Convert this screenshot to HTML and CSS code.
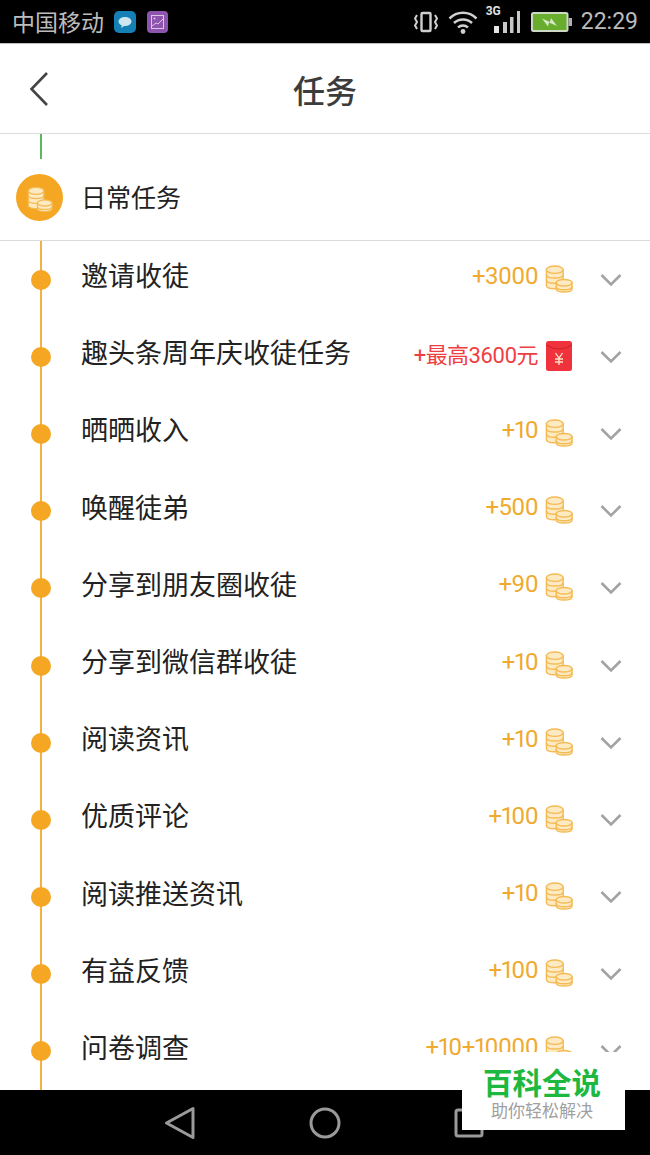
FILE: index.html
```html
<!DOCTYPE html>
<html lang="zh-CN">

<head>
    <meta charset="UTF-8">
    <title>任务</title>
    <link rel="stylesheet" href="styles.css">
</head>

<body>
    <svg class="defs" width="0" height="0">
        <symbol id="coins" viewBox="0 0 30 30">
            <g fill="#fdeac2" stroke="#f4bb55" stroke-width="1.500">
                <path d="M1.500 5v17c0 2 3.500 3.500 9 3.500s9-1.500 9-3.500V5z"/>
                <ellipse cx="10.500" cy="5" rx="9" ry="4"/>
                <path d="M1.500 10.500c0 2 3.500 3.500 9 3.500s9-1.500 9-3.500M1.500 16c0 2 3.500 3.500 9 3.500s9-1.500 9-3.500" fill="none"/>
                <path d="M12 19v6.500c0 2 3.500 3.500 8.500 3.500s8.500-1.500 8.500-3.500V19z"/>
                <ellipse cx="20.500" cy="19" rx="8.500" ry="3.500"/>
                <path d="M12 23c0 2 3.500 3.500 8.500 3.500s8.500-1.500 8.500-3.500" fill="none"/>
            </g>
        </symbol>
        <symbol id="chevron" viewBox="0 0 22 14">
            <path d="M1.500 2L11 11.500 20.500 2" fill="none" stroke="#a3a3a3" stroke-width="2.600"/>
        </symbol>
    </svg>

    <div class="phone">
        <div class="statusbar">
            <div class="status-left">
                <span class="carrier">中国移动</span>
                <svg class="note" width="22" height="22" viewBox="0 0 22 22">
                    <rect width="22" height="22" rx="5" fill="#1580b5"/>
                    <ellipse cx="11" cy="10.500" rx="6.500" ry="4.500" fill="#cfe6f0"/>
                    <path d="M8 14l-1 3 4-2.500z" fill="#cfe6f0"/>
                </svg>
                <svg class="note" width="21" height="22" viewBox="0 0 21 22">
                    <rect width="21" height="22" rx="4" fill="#8d55ad"/>
                    <rect x="4.500" y="4.500" width="12" height="13" fill="none" stroke="#dcc6e8" stroke-width="1"/>
                    <path d="M5 15l4-3 2 1 5-5" fill="none" stroke="#dcc6e8" stroke-width="1"/>
                    <circle cx="7.500" cy="7.500" r="1" fill="#dcc6e8"/>
                </svg>
            </div>
            <div class="status-right">
                <svg width="24" height="22" viewBox="0 0 24 22" class="st-vibrate">
                    <rect x="7.500" y="2" width="9" height="18" rx="1" fill="none" stroke="#cfcfcf" stroke-width="2.400"/>
                    <path d="M3 4L1 7.500 3 11l-2 3.500L3 18M21 4l2 3.500L21 11l2 3.500L21 18" fill="none" stroke="#cfcfcf" stroke-width="2"/>
                </svg>
                <svg width="30" height="24" viewBox="0 0 30 24" class="st-wifi">
                    <path d="M1.500 8.500a19 19 0 0 1 27 0M6 13a13 13 0 0 1 18 0M10 17.500a7 7 0 0 1 10 0" fill="none" stroke="#d0d0d0" stroke-width="2.500"/>
                    <circle cx="15" cy="21.500" r="2.400" fill="#d0d0d0"/>
                </svg>
                <div class="st-signal">
                    <span class="st-3g">3G</span>
                    <svg width="26" height="22" viewBox="0 0 26 22">
                        <rect x="0" y="15" width="5" height="7" fill="#e6e6e6"/>
                        <rect x="9" y="11" width="4" height="11" fill="#c8c8c8"/>
                        <rect x="16" y="6" width="3.500" height="16" fill="#c8c8c8"/>
                        <rect x="23" y="0" width="3" height="22" fill="#c8c8c8"/>
                    </svg>
                </div>
                <svg width="41" height="20" viewBox="0 0 41 20" class="st-battery">
                    <rect x="1" y="1" width="35.500" height="18" rx="1.500" fill="#68ad2e" stroke="#cfd8c4" stroke-width="2"/>
                    <rect x="37.500" y="6" width="3.500" height="8" fill="#b0b0b0"/>
                    <path d="M11 6.500l8 3.500 1-4 6 8-8-3.500-1 4z" fill="#d8e8c8"/>
                </svg>
                <span class="clock">22:29</span>
            </div>
        </div>

        <header class="topbar">
            <svg class="back" width="22" height="36" viewBox="0 0 22 36">
                <path d="M19 2L3.500 18 19 34" fill="none" stroke="#444" stroke-width="2.600"/>
            </svg>
            <h1>任务</h1>
        </header>

        <div class="stub"></div>

        <div class="section-head">
            <div class="section-icon">
                <svg width="26" height="27" viewBox="0 0 30 30"><use href="#coins"/></svg>
            </div>
            <span class="section-name">日常任务</span>
        </div>

        <ul class="tasks">
            <li class="task">
                <div class="rail"><i></i></div>
                <span class="name">邀请收徒</span>
                <span class="reward">+3000</span>
                <svg class="coin"><use href="#coins"/></svg>
                <svg class="chev"><use href="#chevron"/></svg>
            </li>
            <li class="task">
                <div class="rail"><i></i></div>
                <span class="name">趣头条周年庆收徒任务</span>
                <span class="reward red">+最高3600元</span>
                <svg class="coin" viewBox="0 0 28 30">
                    <rect x="1" width="26" height="30" rx="2.500" fill="#f0323c"/>
                    <path d="M1 4q13 8 26 0" fill="none" stroke="#c9202a" stroke-width="1"/>
                    <path d="M10.500 12l3.500 5 3.500-5M10 18h8M10 21h8M14 17v7" fill="none" stroke="#ffe3c8" stroke-width="1.300"/>
                </svg>
                <svg class="chev"><use href="#chevron"/></svg>
            </li>
            <li class="task">
                <div class="rail"><i></i></div>
                <span class="name">晒晒收入</span>
                <span class="reward">+10</span>
                <svg class="coin"><use href="#coins"/></svg>
                <svg class="chev"><use href="#chevron"/></svg>
            </li>
            <li class="task">
                <div class="rail"><i></i></div>
                <span class="name">唤醒徒弟</span>
                <span class="reward">+500</span>
                <svg class="coin"><use href="#coins"/></svg>
                <svg class="chev"><use href="#chevron"/></svg>
            </li>
            <li class="task">
                <div class="rail"><i></i></div>
                <span class="name">分享到朋友圈收徒</span>
                <span class="reward">+90</span>
                <svg class="coin"><use href="#coins"/></svg>
                <svg class="chev"><use href="#chevron"/></svg>
            </li>
            <li class="task">
                <div class="rail"><i></i></div>
                <span class="name">分享到微信群收徒</span>
                <span class="reward">+10</span>
                <svg class="coin"><use href="#coins"/></svg>
                <svg class="chev"><use href="#chevron"/></svg>
            </li>
            <li class="task">
                <div class="rail"><i></i></div>
                <span class="name">阅读资讯</span>
                <span class="reward">+10</span>
                <svg class="coin"><use href="#coins"/></svg>
                <svg class="chev"><use href="#chevron"/></svg>
            </li>
            <li class="task">
                <div class="rail"><i></i></div>
                <span class="name">优质评论</span>
                <span class="reward">+100</span>
                <svg class="coin"><use href="#coins"/></svg>
                <svg class="chev"><use href="#chevron"/></svg>
            </li>
            <li class="task">
                <div class="rail"><i></i></div>
                <span class="name">阅读推送资讯</span>
                <span class="reward">+10</span>
                <svg class="coin"><use href="#coins"/></svg>
                <svg class="chev"><use href="#chevron"/></svg>
            </li>
            <li class="task">
                <div class="rail"><i></i></div>
                <span class="name">有益反馈</span>
                <span class="reward">+100</span>
                <svg class="coin"><use href="#coins"/></svg>
                <svg class="chev"><use href="#chevron"/></svg>
            </li>
            <li class="task">
                <div class="rail"><i></i></div>
                <span class="name">问卷调查</span>
                <span class="reward">+10+10000</span>
                <svg class="coin"><use href="#coins"/></svg>
                <svg class="chev"><use href="#chevron"/></svg>
            </li>
        </ul>

        <div class="navbar">
            <svg width="32" height="34" viewBox="0 0 32 34">
                <path d="M29 2.500v29L2.500 17z" fill="none" stroke="#9a9a9a" stroke-width="3" stroke-linejoin="round"/>
            </svg>
            <svg width="32" height="32" viewBox="0 0 32 32">
                <circle cx="16" cy="16" r="14" fill="none" stroke="#9a9a9a" stroke-width="3"/>
            </svg>
            <svg width="30" height="30" viewBox="0 0 30 30">
                <rect x="2" y="2" width="26" height="26" rx="2" fill="none" stroke="#9a9a9a" stroke-width="3"/>
            </svg>
        </div>

        <div class="watermark">
            <div class="wm-title">百科全说</div>
            <div class="wm-sub">助你轻松解决</div>
        </div>
    </div>
</body>
</html>
```

FILE: styles.css
```css
* {
    box-sizing: border-box;
}
body {
    margin: 0;
    background: #fff;
    font-family: "Noto Sans CJK SC", "Noto Sans", sans-serif;
}
.defs {
    display: block;
    height: 0;
}
.phone {
    width: 650px;
    height: 1155px;
    position: relative;
    overflow: hidden;
    display: flex;
    flex-direction: column;
}
.statusbar {
    height: 44px;
    flex: none;
    background: #000;
    border-bottom: 1px solid #bdbdbd;
    display: flex;
    align-items: center;
    justify-content: space-between;
    padding: 0 12px;
    color: #bcbcbc;
}
.status-left,
.status-right {
    display: flex;
    align-items: center;
}
.carrier {
    font-size: 23px;
    line-height: 43px;
    margin-right: 10px;
}
.note {
    margin-right: 11px;
}
.st-vibrate {
    margin-right: 10px;
}
.st-wifi {
    margin-right: 8px;
}
.st-signal {
    width: 34px;
    height: 43px;
    display: flex;
    align-items: flex-end;
    justify-content: flex-end;
    position: relative;
    margin-right: 11px;
    padding-bottom: 10px;
}
.st-3g {
    position: absolute;
    left: 0;
    top: 4px;
    font: bold 12px/14px Roboto, sans-serif;
    color: #e0e0e0;
}
.st-battery {
    margin-right: 9px;
}
.clock {
    font: 23px/45px Roboto, sans-serif;
}
.topbar {
    height: 90px;
    flex: none;
    border-bottom: 1px solid #dcdcdc;
    display: flex;
    align-items: center;
    justify-content: center;
    position: relative;
}
.topbar h1 {
    margin: 0;
    font-size: 32px;
    font-weight: 500;
    color: #3c3c3c;
}
.back {
    position: absolute;
    left: 28px;
    top: 27px;
}
.stub {
    width: 2px;
    height: 25px;
    flex: none;
    margin-left: 40px;
    background: #5cb85c;
}
.section-head {
    height: 82px;
    flex: none;
    border-bottom: 1px solid #dcdcdc;
    display: flex;
    align-items: center;
    padding: 0 0 4px 16px;
    font-size: 25px;
    color: #222;
}
.section-icon {
    width: 47px;
    height: 47px;
    border-radius: 50%;
    background: #f5a623;
    margin-right: 18px;
    padding-top: 3px;
    display: flex;
    align-items: center;
    justify-content: center;
}
.section-name {
    position: relative;
    top: -2px;
}
.tasks {
    flex: 1;
    margin: 0;
    padding: 0;
    list-style: none;
    overflow: hidden;
}
.task {
    height: 77.200px;
    display: flex;
    align-items: center;
}
.rail {
    width: 81px;
    height: 100%;
    flex: none;
    display: flex;
    align-items: center;
    justify-content: center;
    background: linear-gradient(#f3b044, #f3b044) 40px 0 / 2px 100% no-repeat;
}
.rail i {
    width: 20px;
    height: 20px;
    border-radius: 50%;
    background: #f5a623;
}
.name {
    flex: 1;
    font-size: 27px;
    color: #222;
    position: relative;
    top: -5px;
}
.reward {
    font: 24px "Roboto", "Noto Sans CJK SC", sans-serif;
    font-variant-numeric: proportional-nums;
    letter-spacing: -0.6px;
    color: #efaa30;
    position: relative;
    top: -4px;
    margin-right: 7px;
}
.reward.red {
    font-size: 22px;
    color: #ef3e42;
}
.coin {
    width: 28px;
    height: 30px;
    flex: none;
    margin-right: 27px;
    position: relative;
    top: -1px;
}
.chev {
    width: 22px;
    height: 14px;
    flex: none;
    margin-right: 28px;
}
.navbar {
    height: 65px;
    flex: none;
    background: #000;
    display: flex;
    align-items: center;
    justify-content: flex-start;
    gap: 113px;
    padding-left: 164px;
}
.watermark {
    position: absolute;
    left: 462px;
    top: 1052px;
    width: 163px;
    height: 78px;
    padding-right: 3px;
    background: #fff;
    text-align: center;
    font-family: "Liberation Sans", "Noto Sans CJK SC", sans-serif;
}
.wm-title {
    font-size: 29.500px;
    line-height: 34px;
    font-weight: 700;
    color: #1db83f;
    margin-top: 15px;
}
.wm-sub {
    font-size: 17px;
    line-height: 22px;
    color: #a0a0a0;
}
```
